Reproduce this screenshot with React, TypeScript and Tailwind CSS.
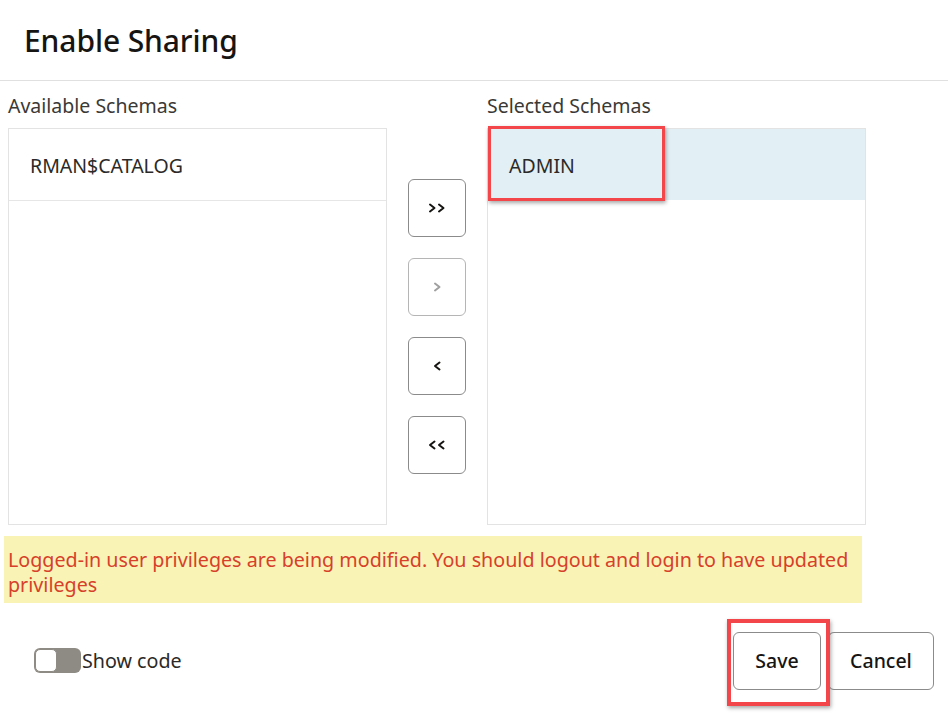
import React from "react";

const font = { fontFamily: '"Noto Sans", "Open Sans", Arial, sans-serif' };

function MoveBtn({ label, disabled }: { label: React.ReactNode; disabled?: boolean }) {
  return (
    <button
      className={`w-[58px] h-[58px] rounded-[6px] border bg-white flex items-center justify-center ${
        disabled ? "border-[#b5b5b5] text-[#9a9a9a]" : "border-[#8b8b8b] text-[#161513]"
      }`}
    >
      {label}
    </button>
  );
}

function Chev({ dir, double, color }: { dir: "l" | "r"; double?: boolean; color: string }) {
  const one = dir === "r" ? "M2 1.5 L6.5 5 L2 8.5" : "M6.5 1.5 L2 5 L6.5 8.5";
  return (
    <svg width={double ? 18 : 9} height="10" viewBox={double ? "0 0 18 10" : "0 0 9 10"} fill="none">
      <path d={one} stroke={color} strokeWidth="2" strokeLinecap="round" strokeLinejoin="round" />
      {double && (
        <path d={one} transform="translate(9 0)" stroke={color} strokeWidth="2" strokeLinecap="round" strokeLinejoin="round" />
      )}
    </svg>
  );
}

export default function App() {
  return (
    <div className="w-[948px] h-[718px] bg-white relative text-[#161513]" style={font}>
      <div className="h-[81px] border-b border-[#e0e0e0] flex items-center pl-[24px] pt-[2px]">
        <h1 className="text-[30px] font-medium leading-none tracking-[-0.1px]">Enable Sharing</h1>
      </div>

      <div className="flex pl-[8px] pt-[11px]">
        <div className="w-[379px]">
          <div className="text-[19.5px] leading-[28px] text-[#3a3936] h-[36px]">Available Schemas</div>
          <div className="h-[397px] border border-[#e3e3e3]">
            <div className="h-[72px] border-b border-[#e6e6e6] flex items-center pl-[21px] pt-[3px] text-[19.5px] text-[#2b2a28]">
              RMAN$CATALOG
            </div>
          </div>
        </div>

        <div className="w-[100px] pt-[87px] flex flex-col items-center gap-[21px]">
          <MoveBtn label={<Chev dir="r" double color="#161513" />} />
          <MoveBtn disabled label={<Chev dir="r" color="#a0a0a0" />} />
          <MoveBtn label={<Chev dir="l" color="#161513" />} />
          <MoveBtn label={<Chev dir="l" double color="#161513" />} />
        </div>

        <div className="w-[379px]">
          <div className="text-[19.5px] leading-[28px] text-[#3a3936] h-[36px]">Selected Schemas</div>
          <div className="h-[397px] border border-[#e3e3e3] relative">
            <div className="h-[71px] bg-[#e2eff5] flex items-center pl-[21px] pt-[3px] text-[19.5px] text-[#2b2a28]">ADMIN</div>
            <div className="absolute left-[0px] top-[-3px] w-[177px] h-[75px] border-[3px] border-[#f2464b] shadow-[1px_2px_4px_rgba(0,0,0,0.35)]" />
          </div>
        </div>
      </div>

      <div className="ml-[4px] mt-[11px] w-[858px] h-[67px] bg-[#f9f4b6] px-[4px] pt-[11px] text-[19.7px] leading-[25px] text-[#d7402a]">
        Logged-in user privileges are being modified. You should logout and login to have updated privileges
      </div>

      <div className="flex items-center justify-between pl-[34px] pr-[14px] mt-[29px]">
        <div className="flex items-center">
          <div className="w-[47px] h-[25px] rounded-[6px] bg-[#8e8a84] relative">
            <div className="absolute left-[1px] top-[1px] w-[22px] h-[23px] rounded-[5px] bg-white border border-[#8e8a84]" />
          </div>
          <span className="text-[19.7px] text-[#2b2a28] ml-[1px]">Show code</span>
        </div>
        <div className="flex items-center gap-[7px]">
          <div className="relative">
            <button className="w-[88px] h-[58px] rounded-[6px] border border-[#8b8b8b] bg-white text-[19.5px] font-medium">
              Save
            </button>
            <div className="absolute left-[-6px] top-[-13px] w-[103px] h-[87px] border-[4px] border-[#f2464b] shadow-[1px_2px_4px_rgba(0,0,0,0.35)]" />
          </div>
          <button className="w-[106px] h-[58px] rounded-[6px] border border-[#8b8b8b] bg-white text-[19.5px] font-medium">
            Cancel
          </button>
        </div>
      </div>
    </div>
  );
}
